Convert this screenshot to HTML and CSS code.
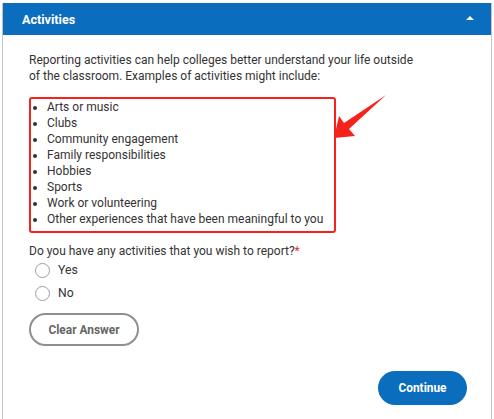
FILE: index.html
```html
<!DOCTYPE html>
<html>
<head>
<meta charset="utf-8">
<link rel="stylesheet" href="styles.css">
</head>
<body>
<div class="panel">
  <div class="header">
    <span class="title">Activities</span>
    <span class="caret"></span>
  </div>
  <div class="content">
    <p class="intro">Reporting activities can help colleges better understand your life outside of the classroom. Examples of activities might include:</p>
    <ul class="list">
      <li>Arts or music</li>
      <li>Clubs</li>
      <li>Community engagement</li>
      <li>Family responsibilities</li>
      <li>Hobbies</li>
      <li>Sports</li>
      <li>Work or volunteering</li>
      <li>Other experiences that have been meaningful to you</li>
    </ul>
    <p class="question">Do you have any activities that you wish to report?<span class="req">*</span></p>
    <div class="radios">
      <label class="radio"><span class="circle"></span>Yes</label>
      <label class="radio"><span class="circle"></span>No</label>
    </div>
    <button class="clear">Clear Answer</button>
    <div class="actions"><button class="continue">Continue</button></div>
  </div>
  <svg class="arrow" width="60" height="50" viewBox="330 92 60 50">
    <polygon points="333,138 338,116 343,123 385,95 348,129 354,136" fill="#f5231c"/>
  </svg>
</div>
</body>
</html>
```
FILE: styles.css
```css
html, body { margin: 0; padding: 0; background: #fff; }
body { font-family: Roboto, "Liberation Sans", Arial, sans-serif; color: #333; }
.panel {
  position: relative;
  margin: 3px 2px 0 2px;
  border-left: 1px solid #c4c4c4;
  border-right: 1px solid #c4c4c4;
  min-height: 416px;
  box-sizing: border-box;
}
.header {
  height: 32px;
  background: #0b6dbd;
  display: flex;
  align-items: center;
  justify-content: space-between;
  padding: 0 17px 0 19px;
}
.title { color: #fff; font-weight: bold; font-size: 12.6px; }
.caret {
  width: 0; height: 0;
  border-left: 4px solid transparent;
  border-right: 4px solid transparent;
  border-bottom: 4px solid #fff;
  margin-bottom: 2px;
}
.content { padding: 17px 26px 0 26px; font-size: 12px; line-height: 16px; }
.intro { margin: 0; width: 388px; }
.list {
  margin: 13px 0 0 0;
  width: 307px;
  box-sizing: border-box;
  border: 2.5px solid #f5231c;
  border-radius: 3px;
  padding: 0 0 4px 16px;
  list-style: disc;
  font-size: 12px;
}
.list li { line-height: 16px; }
.question { margin: 10px 0 0 0; font-size: 12px; }
.req { color: #e0322a; }
.radios { display: flex; flex-direction: column; gap: 7px; margin-top: 3px; }
.radio { display: flex; align-items: center; height: 16px; padding-left: 6px; font-size: 12.2px; }
.circle {
  width: 15px; height: 15px;
  border: 1.5px solid #9e9e9e;
  border-radius: 50%;
  margin-right: 8px;
  box-sizing: border-box;
}
.clear {
  display: block;
  margin-top: 12px;
  width: 110px; height: 33px;
  border: 2px solid #8f8f8f;
  border-radius: 17px;
  background: #fff;
  color: #666;
  font-family: inherit;
  font-weight: bold;
  font-size: 11.9px;
}
.actions { display: flex; justify-content: flex-end; padding-top: 25px; }
.continue {
  width: 89px; height: 34px;
  border: none;
  border-radius: 17px;
  background: #0b6dbd;
  color: #fff;
  font-family: inherit;
  font-weight: bold;
  font-size: 11.9px;
  margin-right: -2px;
}
.arrow { position: absolute; left: 328px; top: 89px; }
```
